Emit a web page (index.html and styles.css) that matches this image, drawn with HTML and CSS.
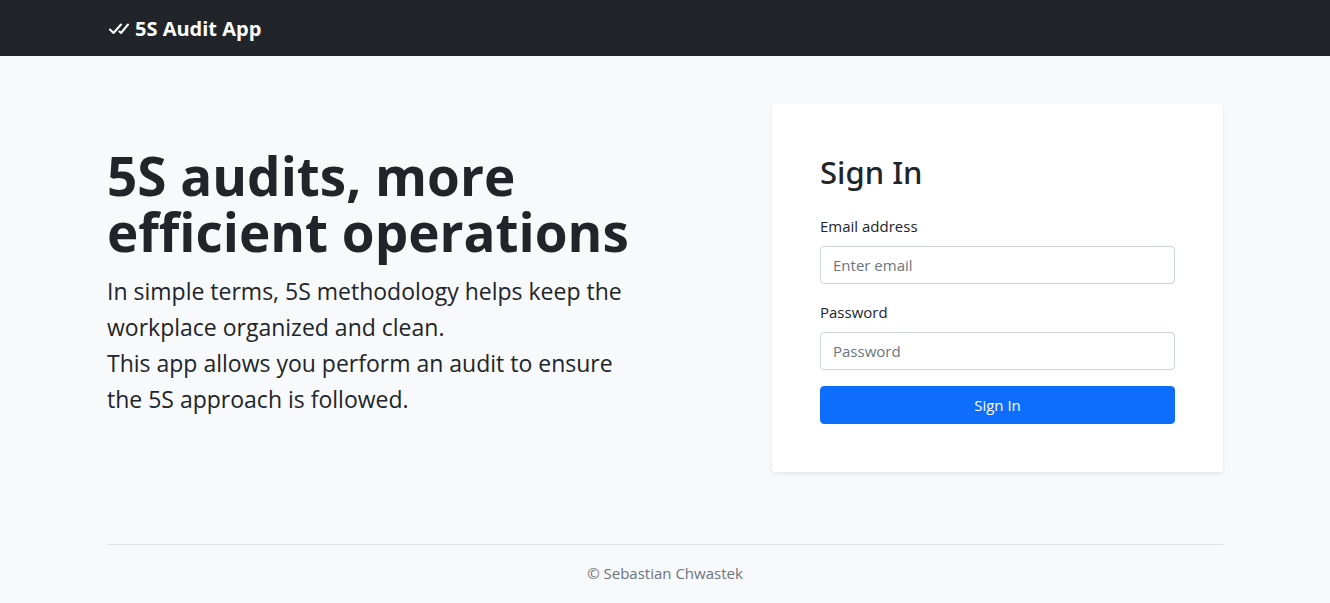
FILE: index.html
```html
<!DOCTYPE html>
<html lang="en">
<head>
<meta charset="utf-8">
<meta name="viewport" content="width=device-width, initial-scale=1">
<title>5S Audit App</title>
<link rel="stylesheet" href="styles.css">
</head>
<body>
<header class="navbar">
  <div class="container">
    <a class="brand" href="#">
      <svg class="brand-icon" viewBox="0 0 22 22" aria-hidden="true"><path d="M3 11.500L6.500 15L14 6.500M12.500 13.500L14 15L21 6.500"/></svg>
      <span>5S Audit App</span>
    </a>
  </div>
</header>
<main class="container hero">
  <section class="intro">
    <h1 class="title">5S audits, more efficient operations</h1>
    <p class="lead">In simple terms, 5S methodology helps keep the workplace organized and clean.<br>This app allows you perform an audit to ensure the 5S approach is followed.</p>
  </section>
  <form class="card">
    <h2 class="card-title">Sign In</h2>
    <div class="field">
      <label class="label" for="email">Email address</label>
      <input class="input" id="email" type="email" placeholder="Enter email">
    </div>
    <div class="field">
      <label class="label" for="password">Password</label>
      <input class="input" id="password" type="password" placeholder="Password">
    </div>
    <button class="button" type="submit">Sign In</button>
  </form>
</main>
<div class="container">
  <footer class="footer">© Sebastian Chwastek</footer>
</div>
</body>
</html>
```
FILE: styles.css
```css
*, *::before, *::after { box-sizing: border-box; }
body {
  margin: 0;
  background: #f8f9fa;
  color: #212529;
  font: 400 15px/24px "Open Sans", "Noto Sans", sans-serif;
}
.container { max-width: 1140px; margin: 0 auto; padding: 0 12px; }
.navbar { background: #212529; padding: 8px 0; }
.brand {
  display: inline-flex;
  align-items: center;
  gap: 6px;
  padding: 6px 0 4px;
  color: #fff;
  font-size: 20px;
  line-height: 30px;
  font-weight: 700;
  text-decoration: none;
  vertical-align: top;
}
.brand-icon { width: 22px; height: 22px; fill: none; stroke: currentColor; stroke-width: 2; stroke-linecap: round; stroke-linejoin: round; }
.hero {
  display: grid;
  grid-template-columns: repeat(12, 1fr);
  column-gap: 24px;
  align-items: center;
  padding-top: 48px;
  padding-bottom: 72px;
}
.intro { grid-column: span 7; padding: 4px 108px 0 0; }
.title { margin: 0 0 13px; font-size: 53px; line-height: 56px; font-weight: 700; }
.lead { margin: 0 0 16px; font-size: 23px; line-height: 36px; }
.card {
  grid-column: span 5;
  padding: 48px;
  background: #fff;
  border-radius: 4px;
  box-shadow: 0 2px 4px rgba(0, 0, 0, .075);
}
.card-title { margin: 0 0 22px; font-family: "Noto Sans", "Open Sans", sans-serif; font-size: 31px; line-height: 40px; font-weight: 500; }
.field { margin-bottom: 16px; }
.label { display: block; margin-bottom: 8px; }
.input {
  display: block;
  width: 100%;
  padding: 6px 12px;
  border: 1px solid #ced4da;
  border-radius: 4px;
  background: #fff;
  color: #212529;
  font: inherit;
}
.input::placeholder { color: #6c757d; opacity: 1; }
.button {
  display: block;
  width: 100%;
  padding: 6px 12px;
  border: 1px solid #0d6efd;
  border-radius: 4px;
  background: #0d6efd;
  color: #fff;
  font: inherit;
  cursor: pointer;
}
.footer {
  padding: 16px 0;
  border-top: 1px solid #dee2e6;
  color: #6c757d;
  text-align: center;
}
```
